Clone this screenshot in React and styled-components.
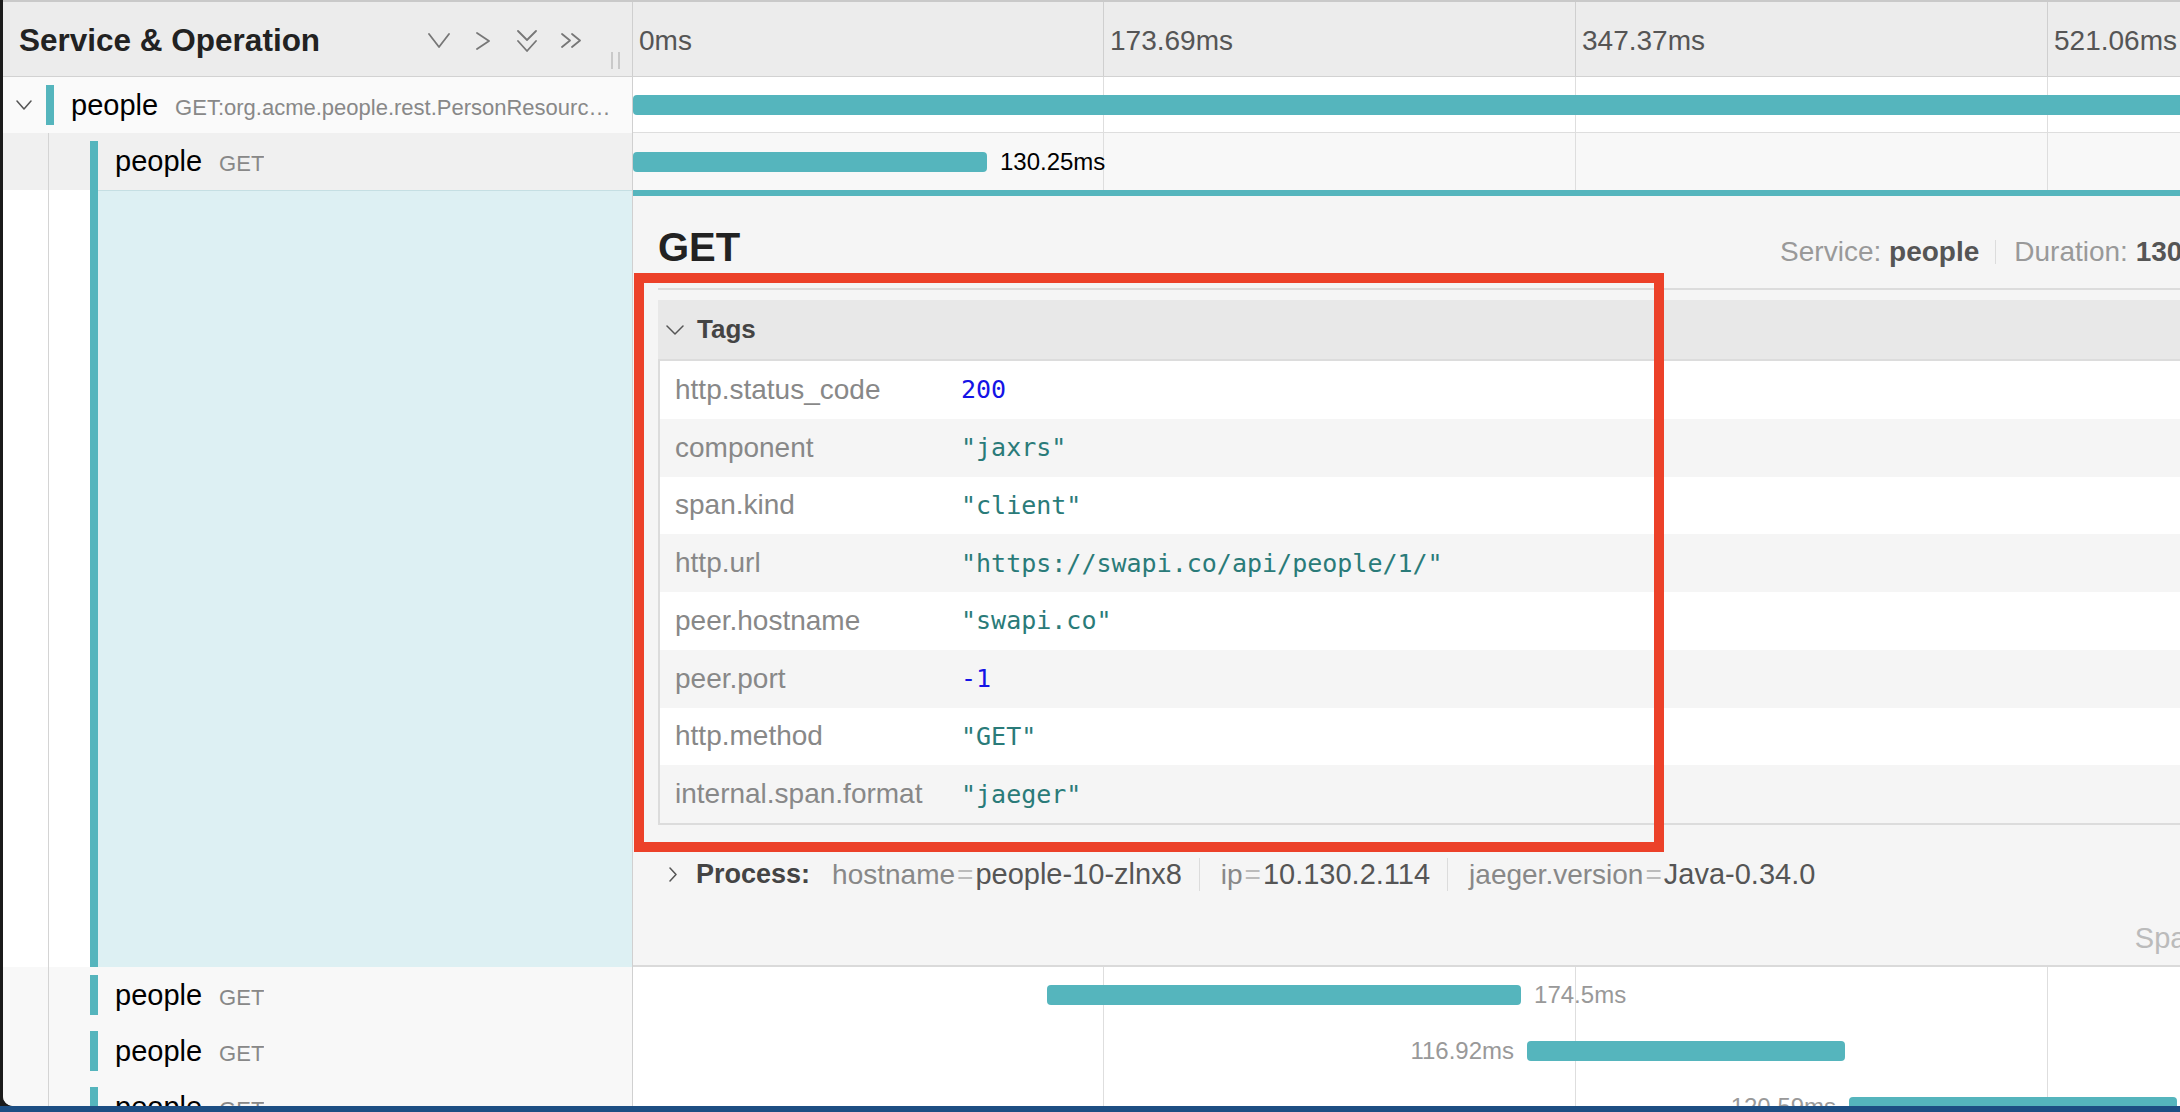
import React from "react";
import styled, { createGlobalStyle } from "styled-components";

const TEAL = "#55b5bd";
const TOTAL = 694.75;
const TIMELINE = 1888;
const NAME_COL = 630;

const toPx = (ms) => (ms / TOTAL) * TIMELINE;

const GlobalStyle = createGlobalStyle`
  html, body {
    margin: 0;
    padding: 0;
  }
  body {
    background: #1b1b1b;
    font-family: "Helvetica Neue", "Liberation Sans", Arial, sans-serif;
    color: #000;
  }
  * {
    box-sizing: border-box;
  }
`;

const Screen = styled.div`
  width: 2180px;
  height: 1112px;
  display: flex;
  flex-direction: column;
  overflow: hidden;
  background: #1b1b1b;
`;

const Window = styled.main`
  flex: 1;
  min-height: 0;
  margin-left: 3px;
  overflow: hidden;
  background: #fff;
  border-top: 2px solid #c9c9c9;
  border-bottom-left-radius: 10px;
`;

const StatusBar = styled.footer`
  height: 6px;
  flex-shrink: 0;
  background: #1d4e83;
`;

const Trace = styled.div`
  width: ${NAME_COL + TIMELINE}px;
`;

const Row = styled.div`
  display: grid;
  grid-template-columns: ${NAME_COL}px ${TIMELINE}px;
  height: ${(p) => (p.$height ? `${p.$height}px` : "auto")};
`;

/* header */

const HeaderRow = styled(Row)`
  border-bottom: 1px solid #d2d2d2;
  background: #ececec;
`;

const HeaderName = styled.div`
  display: flex;
  align-items: center;
  padding: 3px 12px 0 16px;
  border-right: 1px solid #cfcfcf;
`;

const HeaderTitle = styled.h3`
  margin: 0;
  font-size: 31.5px;
  font-weight: 700;
  color: #222;
  white-space: nowrap;
`;

const Toggles = styled.div`
  display: flex;
  margin-left: auto;
`;

const Toggle = styled.button`
  width: 44px;
  height: 44px;
  display: flex;
  align-items: center;
  justify-content: center;
  padding: 0;
  border: 0;
  background: none;
  color: #777;
  cursor: pointer;
`;

const ResizeHandle = styled.span`
  align-self: flex-end;
  width: 9px;
  height: 17px;
  margin: 0 0 7px 18px;
  border-left: 2px solid #c9c9c9;
  border-right: 2px solid #c9c9c9;
`;

const Ticks = styled.div`
  display: grid;
  grid-template-columns: 470px repeat(3, 472px);
`;

const Tick = styled.div`
  display: flex;
  align-items: center;
  padding: 3px 0 0 6px;
  font-size: 28px;
  color: #555;

  & + & {
    border-left: 1px solid #cfcfcf;
  }
`;

/* span rows */

const NameCell = styled.div`
  display: flex;
  align-items: stretch;
  min-width: 0;
  padding-right: 10px;
  background: ${(p) => p.$bg || "#f8f8f8"};
  border-right: 1px solid #d0d0d0;
`;

const Expander = styled.span`
  width: 43px;
  flex-shrink: 0;
  display: flex;
  align-items: center;
  padding-left: 13px;
  color: #555;
`;

const Guide = styled.span`
  width: 46px;
  flex-shrink: 0;
  margin-right: 41px;
  border-right: 1px solid #d4d4d4;
`;

const ServiceMark = styled.span`
  width: 8px;
  flex-shrink: 0;
  margin: ${(p) => (p.$flush ? "0" : p.$open ? "8px 0 0" : "8px 0")};
  background: ${TEAL};
`;

const SpanLabel = styled.span`
  display: flex;
  align-items: baseline;
  align-self: center;
  min-width: 0;
  margin-left: 17px;
  white-space: nowrap;
`;

const ServiceName = styled.span`
  flex-shrink: 0;
  font-size: 29px;
  color: #000;
`;

const OperationName = styled.span`
  min-width: 0;
  margin-left: 17px;
  font-size: 22px;
  color: #888;
  overflow: hidden;
  text-overflow: ellipsis;
`;

const Lane = styled.div`
  display: flex;
  align-items: center;
  background-color: ${(p) => p.$bg || "#fff"};
  background-image: linear-gradient(to right, #dedede 0 1px, transparent 1px);
  background-size: 472px 100%;
  background-position: -2px 0;
  box-shadow: ${(p) => (p.$divider ? "inset 0 -1px #dedede" : "none")};
`;

const Bar = styled.div`
  position: relative;
  flex-shrink: 0;
  height: 20px;
  border-radius: 4px;
  background: ${TEAL};
`;

const Duration = styled.span`
  position: absolute;
  top: 50%;
  transform: translateY(-50%);
  ${(p) =>
    p.$side === "left"
      ? "right: calc(100% + 13px);"
      : "left: calc(100% + 13px);"}
  font-size: 24px;
  color: ${(p) => (p.$strong ? "#000" : "#999")};
  white-space: nowrap;
`;

/* detail */

const DetailName = styled.div`
  display: flex;
  background: #fff;
  border-right: 1px solid #d0d0d0;
`;

const DetailFill = styled.div`
  flex: 1;
  background: #ddf0f3;
  border-top: 1px solid #c5dfe3;
`;

const DetailPanel = styled.section`
  position: relative;
  padding: 27px 25px 11px;
  background: #f5f5f5;
  border-top: 6px solid ${TEAL};
  border-bottom: 2px solid #dadada;
`;

const DetailHeader = styled.header`
  display: flex;
  align-items: baseline;
  justify-content: space-between;
  padding-bottom: 17px;
  border-bottom: 2px solid #dcdcdc;
`;

const DetailTitle = styled.h2`
  margin: 0;
  font-size: 40px;
  line-height: 48px;
  font-weight: 700;
  color: #222;
`;

const Overview = styled.ul`
  display: flex;
  align-items: baseline;
  margin: 0;
  padding: 0;
  list-style: none;
`;

const OverviewItem = styled.li`
  font-size: 28px;
  line-height: 24px;
  color: #999;
  white-space: nowrap;

  & + & {
    margin-left: 16px;
    padding-left: 18px;
    border-left: 1px solid #dcdcdc;
  }

  strong {
    color: #555;
  }
`;

const Section = styled.section`
  margin-top: 10px;
`;

const SectionHeader = styled.div`
  display: flex;
  align-items: center;
  height: 61px;
  padding-left: 8px;
  background: #e8e8e8;
  border-bottom: 2px solid #dcdcdc;
  color: #555;
`;

const SectionTitle = styled.strong`
  margin-left: 13px;
  font-size: 26px;
  color: #444;
`;

const KvList = styled.div`
  border-left: 2px solid #dcdcdc;
  border-bottom: 2px solid #dcdcdc;
`;

const KvRow = styled.div`
  display: grid;
  grid-template-columns: 286px 1fr;
  align-items: center;
  height: 57.75px;
  background: #fff;

  &:nth-child(even) {
    background: #f5f5f5;
  }
`;

const KvKey = styled.span`
  padding-left: 15px;
  font-size: 28px;
  color: #888;
  white-space: nowrap;
`;

const KvValue = styled.span`
  padding-left: 15px;
  font-family: "DejaVu Sans Mono", "Liberation Mono", monospace;
  font-size: 25px;
  color: ${(p) => (p.$number ? "#1414e6" : "#2a7b79")};
  white-space: nowrap;
`;

const ProcessLine = styled.div`
  display: flex;
  align-items: center;
  height: 31px;
  margin-top: 34px;
  padding-left: 11px;
  color: #555;
`;

const ProcessLabel = styled.strong`
  margin-left: 19px;
  font-size: 27px;
  color: #444;
`;

const ProcessTags = styled.ul`
  display: flex;
  align-items: center;
  margin: 0 0 0 22px;
  padding: 0;
  list-style: none;
`;

const ProcessTag = styled.li`
  display: flex;
  align-items: baseline;
  font-size: 28px;
  line-height: 32px;
  white-space: nowrap;

  & + & {
    margin-left: 17px;
    padding-left: 21px;
    border-left: 1px solid #dcdcdc;
  }
`;

const TagKey = styled.span`
  color: #888;
`;

const TagEq = styled.span`
  margin: 0 2px;
  color: #bbb;
`;

const TagVal = styled.span`
  font-size: 29px;
  color: #555;
`;

const SpanIdLine = styled.div`
  margin-top: 32px;
  text-align: right;
  font-size: 29px;
  line-height: 32px;
  color: #bbb;
`;

const Highlight = styled.div`
  position: absolute;
  left: 1px;
  top: 77px;
  width: 1030px;
  height: 579px;
  border: 10px solid #ec4129;
  pointer-events: none;
`;

/* icons */

const Stroke = ({ w, h, d, width = 1.8 }) => (
  <svg
    width={w}
    height={h}
    viewBox={`0 0 ${w} ${h}`}
    fill="none"
    stroke="currentColor"
    strokeWidth={width}
    strokeLinecap="round"
    strokeLinejoin="round"
  >
    <path d={d} />
  </svg>
);

const ChevronDown = ({ w = 22, h = 15, width }) => (
  <Stroke w={w} h={h} width={width} d={`M1 1 L${w / 2} ${h - 1} L${w - 1} 1`} />
);

const ChevronRight = ({ w = 14, h = 18, width }) => (
  <Stroke w={w} h={h} width={width} d={`M1 1 L${w - 1} ${h / 2} L1 ${h - 1}`} />
);

const DoubleDown = () => (
  <Stroke w={20} h={22} d="M1 1 L10 10 L19 1 M1 11 L10 21 L19 11" />
);

const DoubleRight = () => (
  <Stroke w={21} h={15} d="M1 1 L9 7.5 L1 14 M11 1 L19 7.5 L11 14" />
);

/* data */

const ticks = ["0ms", "173.69ms", "347.37ms", "521.06ms"];

const tags = [
  ["http.status_code", 200],
  ["component", "jaxrs"],
  ["span.kind", "client"],
  ["http.url", "https://swapi.co/api/people/1/"],
  ["peer.hostname", "swapi.co"],
  ["peer.port", -1],
  ["http.method", "GET"],
  ["internal.span.format", "jaeger"],
];

const processTags = [
  ["hostname", "people-10-zlnx8"],
  ["ip", "10.130.2.114"],
  ["jaeger.version", "Java-0.34.0"],
];

const childSpans = [
  { start: 152.3, duration: 174.5, side: "right" },
  { start: 329.0, duration: 116.92, side: "left" },
  { start: 447.5, duration: 120.59, side: "left" },
];

const SpanBar = ({ start, duration, side, strong, hideLabel }) => (
  <Bar style={{ marginLeft: toPx(start), width: toPx(duration) }}>
    {!hideLabel && (
      <Duration $side={side} $strong={strong}>
        {duration}ms
      </Duration>
    )}
  </Bar>
);

const App = () => {
  return (
    <Screen>
      <GlobalStyle />
      <Window>
        <Trace>
          <HeaderRow $height={75}>
            <HeaderName>
              <HeaderTitle>Service &amp; Operation</HeaderTitle>
              <Toggles>
                <Toggle aria-label="Collapse one">
                  <ChevronDown />
                </Toggle>
                <Toggle aria-label="Expand one">
                  <ChevronRight />
                </Toggle>
                <Toggle aria-label="Expand all">
                  <DoubleDown />
                </Toggle>
                <Toggle aria-label="Collapse all">
                  <DoubleRight />
                </Toggle>
              </Toggles>
              <ResizeHandle />
            </HeaderName>
            <Ticks>
              {ticks.map((t) => (
                <Tick key={t}>{t}</Tick>
              ))}
            </Ticks>
          </HeaderRow>

          <Row $height={56}>
            <NameCell $bg="#fafafa">
              <Expander>
                <ChevronDown w={16} h={10} width={1.5} />
              </Expander>
              <ServiceMark />
              <SpanLabel>
                <ServiceName>people</ServiceName>
                <OperationName>
                  GET:org.acme.people.rest.PersonResource.getPerson
                </OperationName>
              </SpanLabel>
            </NameCell>
            <Lane $divider>
              <SpanBar start={0} duration={TOTAL} hideLabel />
            </Lane>
          </Row>

          <Row $height={57}>
            <NameCell $bg="#f0f0f0">
              <Guide />
              <ServiceMark $open />
              <SpanLabel>
                <ServiceName>people</ServiceName>
                <OperationName>GET</OperationName>
              </SpanLabel>
            </NameCell>
            <Lane $bg="#f8f8f8">
              <SpanBar start={0} duration={130.25} side="right" strong />
            </Lane>
          </Row>

          <Row>
            <DetailName>
              <Guide />
              <ServiceMark $flush />
              <DetailFill />
            </DetailName>
            <DetailPanel>
              <DetailHeader>
                <DetailTitle>GET</DetailTitle>
                <Overview>
                  <OverviewItem>
                    Service: <strong>people</strong>
                  </OverviewItem>
                  <OverviewItem>
                    Duration: <strong>130.25ms</strong>
                  </OverviewItem>
                  <OverviewItem>
                    Start Time: <strong>0ms</strong>
                  </OverviewItem>
                </Overview>
              </DetailHeader>

              <Section>
                <SectionHeader>
                  <ChevronDown w={18} h={10} width={1.5} />
                  <SectionTitle>Tags</SectionTitle>
                </SectionHeader>
                <KvList>
                  {tags.map(([key, value]) => (
                    <KvRow key={key}>
                      <KvKey>{key}</KvKey>
                      <KvValue $number={typeof value === "number"}>
                        {typeof value === "number" ? value : `"${value}"`}
                      </KvValue>
                    </KvRow>
                  ))}
                </KvList>
              </Section>

              <ProcessLine>
                <ChevronRight w={8} h={15} width={1.5} />
                <ProcessLabel>Process:</ProcessLabel>
                <ProcessTags>
                  {processTags.map(([key, value]) => (
                    <ProcessTag key={key}>
                      <TagKey>{key}</TagKey>
                      <TagEq>=</TagEq>
                      <TagVal>{value}</TagVal>
                    </ProcessTag>
                  ))}
                </ProcessTags>
              </ProcessLine>

              <SpanIdLine>SpanID: 6b9f3a2d41c8e705</SpanIdLine>

              <Highlight />
            </DetailPanel>
          </Row>

          {childSpans.map((span) => (
            <Row $height={56} key={span.start}>
              <NameCell>
                <Guide />
                <ServiceMark />
                <SpanLabel>
                  <ServiceName>people</ServiceName>
                  <OperationName>GET</OperationName>
                </SpanLabel>
              </NameCell>
              <Lane>
                <SpanBar {...span} />
              </Lane>
            </Row>
          ))}
        </Trace>
      </Window>
      <StatusBar />
    </Screen>
  );
};

export default App;
